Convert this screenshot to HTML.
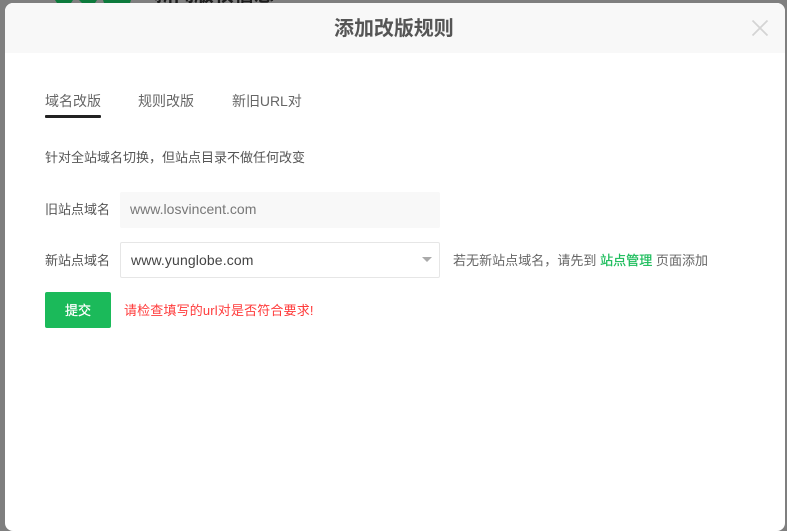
<!DOCTYPE html>
<html lang="zh"><head><meta charset="utf-8"><style>
html,body{margin:0;padding:0;width:787px;height:531px;overflow:hidden;background:#7f7f7f}
*{box-sizing:border-box}
body{position:relative;font-family:"Liberation Sans","Noto Sans CJK SC",sans-serif;font-size:13px;color:#555}
.a{position:absolute;white-space:nowrap}
.modal{position:absolute;left:5px;top:3px;width:780px;height:528px;background:#fff;border-radius:8px;overflow:hidden}
.head{position:absolute;left:0;top:0;width:780px;height:50px;background:#f8f8f8}
</style></head><body>
<svg class="a" style="left:50px;top:0" width="90" height="4" viewBox="0 0 90 4"><path d="M5 0H23L21 3H7ZM29 0H47L45 3H32ZM53 0H81L80 3H54Z" fill="#0d7a3c"/></svg>
<div class="a" style="left:154px;top:-15px;font-size:20px;line-height:20px;color:#1c1c1c;font-weight:bold;letter-spacing:0">新闻版权信息</div>
<div class="modal">
<div class="head"></div>
</div>
<div class="a" style="left:334px;top:17px;font-size:20px;line-height:25px;font-weight:bold;color:#555;letter-spacing:-.05px">添加改版规则</div>
<svg class="a" style="left:751px;top:19px" width="18" height="18" viewBox="0 0 18 18"><path d="M1.5 1.5L16.5 16.5M16.5 1.5L1.5 16.5" stroke="#d4d4d4" stroke-width="1.8" fill="none"/></svg>
<div class="a" style="left:45px;top:92px;font-size:14px;line-height:18px;color:#666">域名改版</div>
<div class="a" style="left:138px;top:92px;font-size:14px;line-height:18px;color:#666">规则改版</div>
<div class="a" style="left:232px;top:92px;font-size:14px;line-height:18px;color:#666;letter-spacing:-.05px">新旧URL对</div>
<div class="a" style="left:45px;top:115px;width:56px;height:3px;background:#222;border-radius:1px"></div>
<div class="a" style="left:45px;top:149px;line-height:18px">针对全站域名切换，但站点目录不做任何改变</div>
<div class="a" style="left:45px;top:201px;line-height:18px">旧站点域名</div>
<div class="a" style="left:120px;top:192px;width:320px;height:36px;background:#f8f8f8;border-radius:2px;padding-left:10px;line-height:35px;font-size:14px;letter-spacing:.02px;color:#777">www.losvincent.com</div>
<div class="a" style="left:45px;top:252px;line-height:18px">新站点域名</div>
<div class="a" style="left:120px;top:242px;width:320px;height:36px;background:#fff;border:1px solid #e6e6e6;border-radius:2px;padding-left:10px;line-height:35px;font-size:14px;letter-spacing:.12px;color:#444">www.yunglobe.com</div>
<div class="a" style="left:422px;top:257px;width:0;height:0;border-left:5px solid transparent;border-right:5px solid transparent;border-top:5px solid #aaa"></div>
<div class="a" style="left:453px;top:252px;line-height:18px;color:#666;letter-spacing:.04px">若无新站点域名，请先到 <span style="color:#1bbc5b;-webkit-text-stroke:.25px #1bbc5b">站点管理</span> 页面添加</div>
<div class="a" style="left:45px;top:292px;width:66px;height:36px;background:#1bba5a;border-radius:2px;color:#fff;text-align:center;line-height:37px;font-size:13px;-webkit-text-stroke:.25px #fff">提交</div>
<div class="a" style="left:124px;top:302px;line-height:18px;color:#ff3b3b;letter-spacing:.15px">请检查填写的url对是否符合要求!</div>
</body></html>
